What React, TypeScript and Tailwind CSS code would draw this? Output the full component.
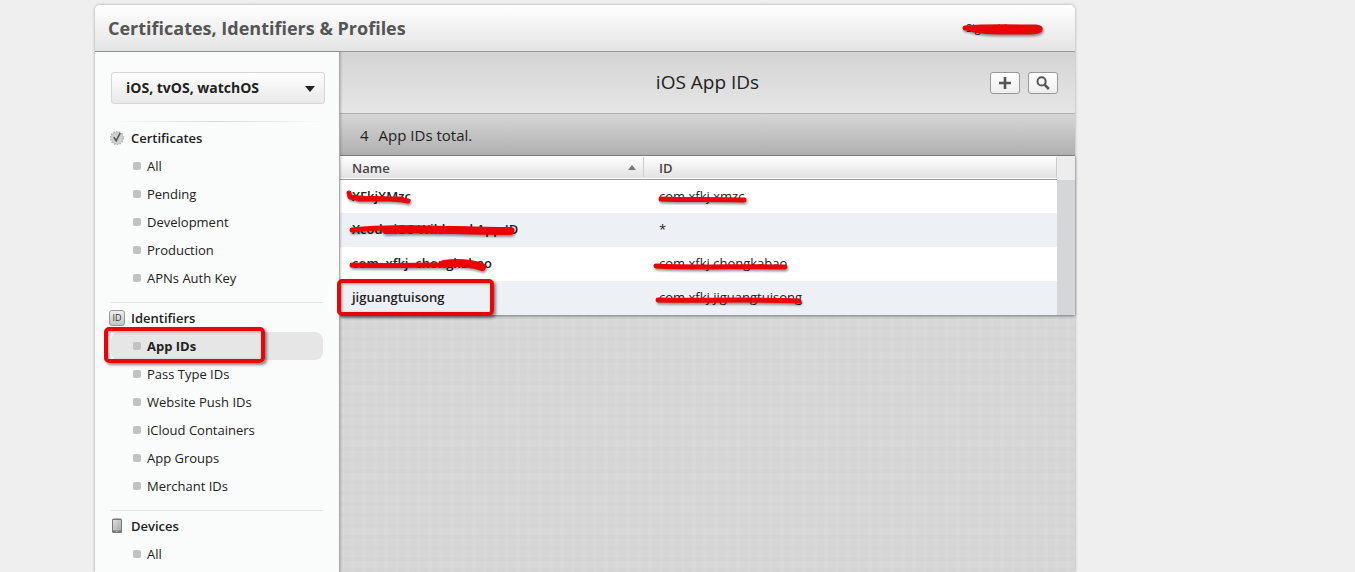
import React, { useState } from 'react';

interface NavGroup {
  title: string;
  icon: React.ReactNode;
  items: string[];
}

interface AppId {
  name: string;
  id: string;
  nameStroke?: React.ReactNode;
  idStroke?: React.ReactNode;
}

const SealIcon = () => (
  <svg width="16" height="16" viewBox="0 0 16 16">
    <circle cx="8" cy="8" r="6.3" fill="#cfcfcf" stroke="#b5b5b5" strokeWidth="1.6" strokeDasharray="1.6 1.2" />
    <circle cx="8" cy="8" r="5.6" fill="#d0d0d0" />
    <path d="M4.8 7.2 L7.2 10.6 L11.2 3" fill="none" stroke="#555" strokeWidth="1.6" />
  </svg>
);

const IdIcon = () => (
  <span className="flex h-4 w-4 items-center justify-center rounded-[3px] border border-[#999] bg-gradient-to-b from-[#eee] to-[#c4c4c4] text-[9px] font-normal text-[#333]">
    ID
  </span>
);

const DeviceIcon = () => (
  <svg width="16" height="16" viewBox="0 0 16 16">
    <defs>
      <linearGradient id="screen" x1="0" y1="0" x2="1" y2="1">
        <stop offset="0" stopColor="#ddd" />
        <stop offset="1" stopColor="#aaa" />
      </linearGradient>
    </defs>
    <rect x="3" y="0.5" width="10" height="14.5" rx="1.5" fill="#777" />
    <rect x="4" y="2" width="8" height="10.5" fill="url(#screen)" />
    <rect x="7" y="13.2" width="1.6" height="1" fill="#ccc" />
  </svg>
);

const groups: NavGroup[] = [
  {
    title: 'Certificates',
    icon: <SealIcon />,
    items: ['All', 'Pending', 'Development', 'Production', 'APNs Auth Key'],
  },
  {
    title: 'Identifiers',
    icon: <IdIcon />,
    items: ['App IDs', 'Pass Type IDs', 'Website Push IDs', 'iCloud Containers', 'App Groups', 'Merchant IDs'],
  },
  { title: 'Devices', icon: <DeviceIcon />, items: ['All'] },
];

// Red marker stroke drawn over a piece of text
const Marker = ({ d, width = 5, extra }: { d: string; width?: number; extra?: string }) => (
  <svg
    className="pointer-events-none absolute top-0 left-0 h-full w-full overflow-visible drop-shadow-[1px_2px_1px_rgba(0,0,0,0.4)]"
    fill="none"
    stroke="#ea0408"
    strokeLinecap="round"
    strokeLinejoin="round"
  >
    <path d={d} strokeWidth={width} />
    {extra && <path d={extra} strokeWidth={8} />}
  </svg>
);

const MarkerBox = ({ className }: { className: string }) => (
  <span
    className={`pointer-events-none absolute z-10 rounded-[5px] border-4 border-[#ea0408] shadow-[2px_2px_3px_rgba(0,0,0,0.45),inset_1px_1px_3px_rgba(0,0,0,0.35)] ${className}`}
  />
);

const rows: AppId[] = [
  {
    name: 'XFkjXMzc',
    id: 'com.xfkj.xmzc',
    nameStroke: <Marker d="M9 13 L10 17 C26 20 48 17 68 21 M18 19 H62" />,
    idStroke: <Marker d="M17 19 C40 20 75 19 100 20" />,
  },
  {
    name: 'Xcode iOS Wildcard App ID',
    id: '*',
    nameStroke: <Marker d="M12 17 C60 12 110 17 172 17" extra="M46 17 C80 15 120 18 170 18" />,
  },
  {
    name: 'com  xfkj  chongkabao',
    id: 'com.xfkj.chongkabao',
    nameStroke: <Marker d="M12 18 C40 19 75 18 105 18" extra="M104 17 C118 15 130 16 142 20" />,
    idStroke: <Marker d="M12 19 C50 21 100 19 141 20" />,
  },
  {
    name: 'jiguangtuisong',
    id: 'com.xfkj.jiguangtuisong',
    nameStroke: <MarkerBox className="-top-0.5 -left-[3px] h-[37px] w-[157px]" />,
    idStroke: <Marker d="M14 19 C50 20 110 18 155 20" />,
  },
];

const Sidebar = () => {
  const [active, setActive] = useState('App IDs');

  return (
    <aside className="z-10 w-[245px] shrink-0 border-r border-[#aaa] bg-[#fafbfb] pt-5 pr-3.5 pl-4 shadow-[1px_0_2px_rgba(0,0,0,0.2)]">
      <div className="relative">
        <select
          aria-label="Platform"
          className="h-8 w-full appearance-none rounded-[3px] border border-[#d6d6d6] bg-gradient-to-b from-white to-[#e9e9e9] pl-3.5 text-sm font-bold text-[#222]"
        >
          <option>iOS, tvOS, watchOS</option>
          <option>macOS</option>
        </select>
        <svg className="pointer-events-none absolute top-3.5 right-2.5" width="10" height="6" viewBox="0 0 10 6">
          <path d="M0 0 H10 L5 6 Z" fill="#222" />
        </svg>
      </div>
      <nav className="pt-[17px] text-[13px] text-[#222]">
        {groups.map((group, idx) => (
          <div key={group.title} className={idx > 0 ? 'mt-2.5' : ''}>
            <div
              className={
                idx > 0
                  ? 'mr-0.5 mb-px h-px bg-[#e2e2e2]'
                  : 'mb-0.5 h-px bg-gradient-to-r from-transparent via-[#d8d8d8] to-transparent'
              }
            />
            <h2 className="flex h-7 items-center gap-1.5 font-semibold">
              <span className="-ml-0.5 flex w-4 justify-center">{group.icon}</span>
              <span className="pt-0.5">{group.title}</span>
            </h2>
            <ul>
              {group.items.map((item) => {
                const selected = item === active;
                return (
                  <li key={item} className="relative pr-0.5">
                    <a
                      href="#"
                      onClick={() => setActive(item)}
                      className={`flex h-7 items-center gap-1.5 rounded-lg pl-[22px] ${selected ? 'bg-[#e6e6e6] font-bold' : ''}`}
                    >
                      <span className="h-2 w-2 rounded-[2px] bg-[#c2c2c2]" />
                      <span className="pt-0.5">{item}</span>
                    </a>
                    {item === 'App IDs' && <MarkerBox className="-top-[5px] -left-[7px] h-9 w-[161px]" />}
                  </li>
                );
              })}
            </ul>
          </div>
        ))}
      </nav>
    </aside>
  );
};

const toolButton =
  'flex h-[22px] w-[30px] items-center justify-center rounded-[3px] border border-[#999] bg-gradient-to-b from-white to-[#eee]';

const Toolbar = () => (
  <div className="grid h-[62px] grid-cols-[1fr_auto_1fr] items-center border-b border-[#b0b0b0] bg-gradient-to-b from-[#d4d4d4] to-[#e6e6e6] px-[17px]">
    <h2 className="col-start-2 text-[19px] text-[#222]">iOS App IDs</h2>
    <div className="flex justify-end gap-2">
      <button aria-label="Add" className={toolButton}>
        <svg width="12" height="12" viewBox="0 0 12 12">
          <path d="M6 0 V12 M0 6 H12" stroke="#555" strokeWidth="2.6" />
        </svg>
      </button>
      <button aria-label="Search" className={toolButton}>
        <svg width="14" height="14" viewBox="0 0 14 14" fill="none" stroke="#555">
          <circle cx="5.6" cy="5.4" r="4.1" strokeWidth="2" />
          <path d="M8.6 8.6 L12.8 13" strokeWidth="2.6" />
        </svg>
      </button>
    </div>
  </div>
);

const AppIdTable = () => (
  <div className="flex shadow-[0_1px_3px_rgba(0,0,0,0.45)]">
    <table className="flex-1 table-fixed border-collapse text-[13px] text-[#222]">
      <thead>
        <tr className="h-[23px] border-b border-[#999] bg-gradient-to-b from-white to-[#e3e3e3] text-left text-[#444]">
          <th className="w-[304px] py-0 pr-0 pl-3 font-semibold">
            <div className="flex h-5 items-center justify-between border-r border-[#ccc] pr-[7px]">
              <span className="pt-0.5">Name</span>
              <svg width="8" height="5" viewBox="0 0 8 5">
                <path d="M4 0 L8 5 H0 Z" fill="#777" />
              </svg>
            </div>
          </th>
          <th className="py-0 pr-0 pl-[15px] font-semibold">
            <div className="flex h-5 items-center border-r border-[#ccc]">
              <span className="pt-0.5">ID</span>
            </div>
          </th>
        </tr>
      </thead>
      <tbody>
        {rows.map((row) => (
          <tr key={row.name} className="h-[34px] odd:bg-white even:bg-[#edf1f5]">
            <td className="relative py-0 pl-3 font-semibold whitespace-pre">
              {row.name}
              {row.nameStroke}
            </td>
            <td className="relative py-0 pl-[15px]">
              {row.id}
              {row.idStroke}
            </td>
          </tr>
        ))}
      </tbody>
    </table>
    <div className="w-[18px] bg-[#d5d6d7]">
      <div className="h-6 bg-[#ededed]" />
    </div>
  </div>
);

export default function App() {
  return (
    <div className="min-h-screen bg-[#efefef] pt-[5px] pl-[95px] font-['Open_Sans','Liberation_Sans',sans-serif]">
      <div className="flex min-h-[calc(100vh-5px)] max-w-[980px] flex-col rounded-t-[5px] shadow-[0_0_3px_rgba(0,0,0,0.35)]">
        <header className="flex h-[47px] items-center justify-between rounded-t-[5px] border-b border-[#999] bg-gradient-to-b from-white to-[#e4e4e4] pr-9 pl-[13px]">
          <h1 className="text-lg font-bold text-[#555]">Certificates, Identifiers &amp; Profiles</h1>
          <span className="relative text-[11px] text-[#222]">
            Signed-in user
            <Marker d="M-1 8 C20 6 50 7 70 7 C78 8 74 12 64 12 C40 12 20 13 4 9 M6 9 H55" />
          </span>
        </header>
        <div className="flex flex-1">
          <Sidebar />
          <main className="flex-1 bg-[#d7d7d7] bg-[repeating-linear-gradient(90deg,rgba(255,255,255,0.06)_0_4px,transparent_4px_11px),repeating-linear-gradient(0deg,rgba(0,0,0,0.01)_0_4px,transparent_4px_11px)]">
            <Toolbar />
            <p className="flex h-[42px] items-center gap-2.5 border-b border-[#888] bg-gradient-to-b from-[#d6d6d6] to-[#b0b0b0] px-5 pt-0.5 text-[15px] text-[#222]">
              <span>4</span> App IDs total.
            </p>
            <AppIdTable />
          </main>
        </div>
      </div>
    </div>
  );
}
